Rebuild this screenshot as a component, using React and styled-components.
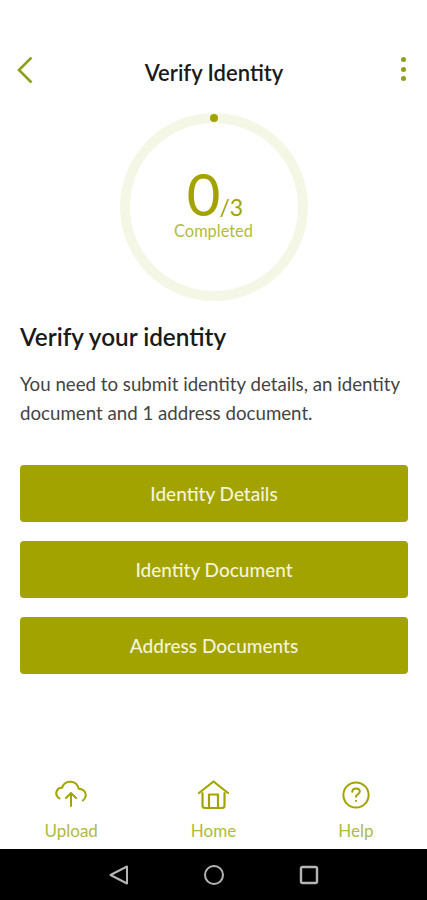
import React from 'react';
import styled, { createGlobalStyle } from 'styled-components';

const olive = '#a3a300';

const GlobalStyle = createGlobalStyle`
  html, body {
    margin: 0;
    padding: 0;
    background: #ffffff;
  }
  * {
    box-sizing: border-box;
  }
`;

const App = () => {
  return (
    <Page>
      <GlobalStyle />
      <Main>
        <Header>
          <BackIcon>
            <svg width="20" height="30" viewBox="0 0 20 30" fill="none">
              <path d="M17.5 0.5 L5 13 L17.5 25.5" stroke="#8f9f1c" strokeWidth="2.6" />
            </svg>
          </BackIcon>
          <Title>Verify Identity</Title>
          <Dots>
            <Dot />
            <Dot />
            <Dot />
          </Dots>
        </Header>

        <RingWrap>
          <Ring>
            <RingDot />
            <Count>
              <Big>0</Big>
              <Small>/3</Small>
            </Count>
            <Completed>Completed</Completed>
          </Ring>
        </RingWrap>

        <Content>
          <Heading>Verify your identity</Heading>
          <Desc>You need to submit identity details, an identity document and 1 address document.</Desc>
          <Buttons>
            <ActionBtn>Identity Details</ActionBtn>
            <ActionBtn>Identity Document</ActionBtn>
            <ActionBtn>Address Documents</ActionBtn>
          </Buttons>
        </Content>
      </Main>

      <TabBar>
        <Tab>
          <svg width="34" height="30" viewBox="0 0 34 30" fill="none" stroke={olive} strokeWidth="2" strokeLinecap="round" strokeLinejoin="round">
            <path d="M5.5 18.5 C2.5 16.5 1.5 13.5 3 10.5 C4.2 8.5 6 7.5 8 7.8 C9.5 3.5 13 1.5 17 1.8 C21 2.2 23.8 4.8 24.8 8.8 C28.5 8.8 31.8 11.5 31.8 15.2 C31.8 17.5 30.5 19.2 29 20.5" />
            <path d="M17 26 V13 M12 18 L17 13 L22 18" />
          </svg>
          <TabLabel>Upload</TabLabel>
        </Tab>
        <Tab>
          <svg width="34" height="30" viewBox="0 0 34 30" fill="none" stroke={olive} strokeWidth="2.2" strokeLinecap="round" strokeLinejoin="round">
            <path d="M3 13 L17.5 1.5 L32 13" />
            <path d="M6.5 13 V25.5 Q6.5 28 9 28 H26 Q28.5 28 28.5 25.5 V13" />
            <path d="M13 28 V14.5 H22 V28" />
          </svg>
          <TabLabel>Home</TabLabel>
        </Tab>
        <Tab>
          <svg width="30" height="30" viewBox="0 0 30 30" fill="none" stroke={olive} strokeWidth="2" strokeLinecap="round" strokeLinejoin="round">
            <circle cx="15" cy="15" r="12.6" />
            <path d="M11.2 11.8 C11.4 9.4 13 8.4 15 8.4 C17.2 8.4 18.8 9.7 18.8 11.6 C18.8 14.4 15 14.2 15 16.8" />
            <path d="M15 20.8 V20.9" />
          </svg>
          <TabLabel>Help</TabLabel>
        </Tab>
      </TabBar>

      <NavBar>
        <svg width="20" height="20" viewBox="0 0 20 20" fill="none" stroke="#b5b5b5" strokeWidth="2" strokeLinejoin="round">
          <path d="M18 1.5 V18.5 L1.5 10 Z" />
        </svg>
        <svg width="20" height="20" viewBox="0 0 20 20" fill="none" stroke="#b5b5b5" strokeWidth="2">
          <circle cx="10" cy="10" r="9" />
        </svg>
        <svg width="20" height="20" viewBox="0 0 20 20" fill="none" stroke="#b5b5b5" strokeWidth="2.4">
          <rect x="2" y="2" width="16" height="16" rx="1.5" />
        </svg>
      </NavBar>
    </Page>
  );
};

const Page = styled.div`
  width: 427px;
  height: 900px;
  display: flex;
  flex-direction: column;
  overflow: hidden;
  font-family: Lato, "Liberation Sans", sans-serif;
  background: #ffffff;
`;
const Main = styled.div`
  flex: 1;
  display: flex;
  flex-direction: column;
  padding-top: 54px;
`;
const Header = styled.div`
  height: 36px;
  padding: 0 21px 0 14px;
  display: grid;
  grid-template-columns: 1fr auto 1fr;
  align-items: center;
`;
const BackIcon = styled.div`
  width: 20px;
  height: 30px;
  display: flex;
`;
const Title = styled.div`
  font-size: 22px;
  font-weight: 600;
  color: #1a1a1a;
  margin-left: 8px;
`;
const Dots = styled.div`
  justify-self: end;
  display: flex;
  flex-direction: column;
  gap: 4.5px;
  margin-top: -6px;
`;
const Dot = styled.span`
  width: 5px;
  height: 5px;
  border-radius: 50%;
  background: #8f9f1c;
`;
const RingWrap = styled.div`
  display: flex;
  justify-content: center;
  margin-top: 23px;
`;
const Ring = styled.div`
  position: relative;
  width: 188px;
  height: 188px;
  border-radius: 50%;
  border: 10px solid #f5f7e6;
  display: flex;
  flex-direction: column;
  align-items: center;
  padding-top: 48px;
`;
const RingDot = styled.span`
  position: absolute;
  top: -9px;
  left: 50%;
  width: 8px;
  height: 8px;
  margin-left: -4px;
  border-radius: 50%;
  background: ${olive};
`;
const Count = styled.div`
  display: flex;
  align-items: baseline;
  height: 46px;
  margin: 0 0 4px 3px;
  color: ${olive};
  line-height: 46px;
`;
const Big = styled.span`
  font-size: 58px;
`;
const Small = styled.span`
  font-size: 23px;
  margin-left: -1px;
`;
const Completed = styled.div`
  font-size: 16.4px;
  line-height: 20px;
  color: #b3bb3c;
`;
const Content = styled.div`
  padding: 0 19px 0 20px;
`;
const Heading = styled.h1`
  margin: 21px 0 0;
  font-size: 24.3px;
  line-height: 30px;
  font-weight: 600;
  color: #1a1a1a;
`;
const Desc = styled.p`
  margin: 18px 0 0;
  font-size: 18.7px;
  line-height: 29px;
  color: #444444;
`;
const Buttons = styled.div`
  margin-top: 37px;
  display: flex;
  flex-direction: column;
  gap: 19.5px;
`;
const ActionBtn = styled.div`
  height: 56.5px;
  border-radius: 4px;
  background: ${olive};
  color: #f4f4d8;
  font-size: 19px;
  font-weight: 500;
  display: flex;
  align-items: center;
  justify-content: center;
`;
const TabBar = styled.div`
  height: 73px;
  padding-top: 4px;
  display: grid;
  grid-template-columns: repeat(3, 142.33px);
  align-items: start;
`;
const Tab = styled.div`
  display: flex;
  flex-direction: column;
  align-items: center;
  gap: 11px;
`;
const TabLabel = styled.span`
  font-size: 17px;
  line-height: 20px;
  color: #b0ba3c;
`;
const NavBar = styled.div`
  height: 51px;
  background: #000000;
  display: flex;
  align-items: center;
  justify-content: center;
  gap: 75px;
`;

export default App;
